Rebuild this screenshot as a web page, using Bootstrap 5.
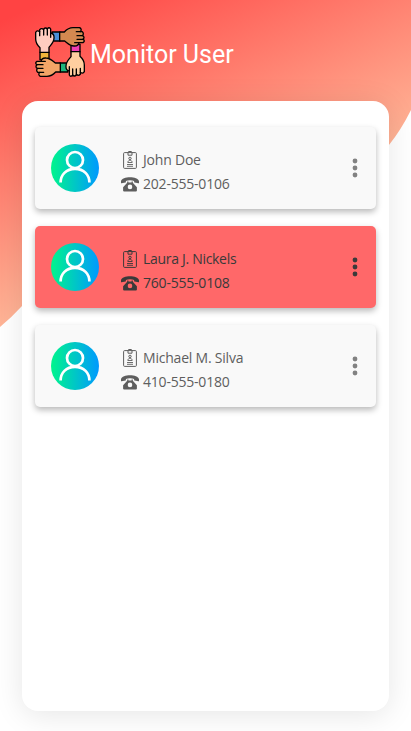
<!DOCTYPE html>
<html lang="en">
<head>
<meta charset="utf-8">
<meta name="viewport" content="width=device-width, initial-scale=1">
<title>Monitor User</title>
<link href="https://cdn.jsdelivr.net/npm/bootstrap@5.3.0/dist/css/bootstrap.min.css" rel="stylesheet">
<style>
body{width:411px;height:731px;font-family:"Open Sans","Noto Sans",sans-serif;background:#fff}
.backdrop{left:0;top:0;z-index:0}
.page-head{height:101px;padding:27px 0 0 35px;gap:5px}
.page-title{font:400 25px/30px Roboto,sans-serif;color:#fff;margin-top:13px}
.panel{width:367px;height:610px;margin-left:22px;padding:26px 13px;border-radius:16px;gap:17px;box-shadow:0 4px 30px rgba(0,0,0,.1)}
.user-card{height:82px;border-radius:5px;background:#f9f9f9;color:#5e5e5e;padding-left:16px;padding-right:18px;box-shadow:0 3px 6px rgba(0,0,0,.28)}
.user-card.alerting{background:#ff6869;color:#3a3a3a}
.details{margin-left:22px;padding-top:8px}
.line{height:24px;gap:4px;font-size:14px;line-height:24px;letter-spacing:-.21px;white-space:nowrap}
.alerting .line:first-child{letter-spacing:-.3px}
.dots{color:#828282}
.alerting .dots{color:#3a3a3a}
svg{display:block;flex:none}
</style>
<script src="https://cdn.jsdelivr.net/npm/bootstrap@5.3.0/dist/js/bootstrap.bundle.min.js"></script>
</head>
<body class="position-relative overflow-hidden m-0">
<svg class="backdrop position-absolute" width="411" height="340" viewBox="0 0 411 340" aria-hidden="true">
<defs><linearGradient id="sky" gradientUnits="userSpaceOnUse" x1="8" y1="18" x2="124" y2="268"><stop stop-color="#ff4343"/><stop offset="1" stop-color="#ffb496"/></linearGradient></defs>
<path fill="url(#sky)" d="M0 0H411V110Q401 130 389 145C280 290 110 220 22 306Q12 317 0 327Z"/>
</svg>
<svg width="0" height="0" class="position-absolute" aria-hidden="true">
<defs>
<linearGradient id="avatarFill"><stop stop-color="#00f58c"/><stop offset="1" stop-color="#0099ff"/></linearGradient>
<g id="cuff"><path d="M15 76H42V98H15Z" stroke="#000" stroke-width="4"/></g>
<g id="hand" stroke="#000" stroke-width="4" stroke-linejoin="round" stroke-linecap="round">
<path d="M15 76V62C5 53 2 46 2 36V16Q7 8 14 14V8Q20 2 26 8V6Q32 0 37 6V5Q43 -1 47 6V18Q58 20 57 33C57 45 51 50 42 61V76Z"/>
<path fill="none" d="M14 14V26M26 8V24M37 6V24M47 18V31"/></g>
<symbol id="avatar" viewBox="0 0 48 48"><circle cx="24" cy="24" r="24" fill="url(#avatarFill)"/><g fill="none" stroke="#fff" stroke-width="2.7"><circle cx="24" cy="16" r="8"/><path d="M9.6 38.5C9.6 31 15 24.8 24 24.8S38.4 31 38.4 38.5"/></g></symbol>
<symbol id="badge-id" viewBox="0 0 18 18"><g fill="none" stroke="currentColor"><rect x="2.6" y="1.6" width="12.8" height="15.8" rx="1"/><path d="M7 1.5V4.2H11V1.5L10.4.5H7.6Z"/><circle cx="9" cy="7.4" r="1.2"/><path d="M6.8 11.5C6.8 8.6 11.2 8.6 11.2 11.5ZM6 13.5H12M6 15.3H12" stroke-width=".9"/></g></symbol>
<symbol id="phone" viewBox="0 0 18 15"><path fill="currentColor" d="M0 4.2C1-1 17-1 18 4.2V5.7Q18 6.3 17.3 6.2L13.7 5.6Q13.1 5.5 13.1 4.9V3.9C11 3 7 3 4.9 3.9V4.9Q4.9 5.5 4.3 5.6L.7 6.2Q0 6.3 0 5.7Z"/><path fill="currentColor" fill-rule="evenodd" d="M6.2 4.4H7.4V5.5H10.6V4.4H11.8V5.7L15.9 10.2V13.6Q15.9 14.6 14.9 14.6H3.1Q2.1 14.6 2.1 13.6V10.2L6.2 5.7ZM9 7.6A2.3 2.3 0 1 0 9 12.2A2.3 2.3 0 1 0 9 7.6Z"/></symbol>
<symbol id="more" viewBox="0 0 6 20"><g fill="currentColor"><circle cx="3" cy="3" r="2.4"/><circle cx="3" cy="10" r="2.4"/><circle cx="3" cy="17" r="2.4"/></g></symbol>
</defs>
</svg>

<header class="page-head position-relative d-flex align-items-start">
<svg width="50" height="50" viewBox="0 0 150 150" role="img" aria-label="Joined hands">
<use href="#cuff" fill="#f3b53b"/><use href="#cuff" fill="#4a90d9" transform="rotate(90 75 75)"/><use href="#cuff" fill="#f03cb4" transform="rotate(180 75 75)"/><use href="#cuff" fill="#1fb57c" transform="rotate(270 75 75)"/>
<use href="#hand" fill="#ffcdc0"/><use href="#hand" fill="#d48950" transform="rotate(90 75 75)"/><use href="#hand" fill="#ffcfa0" transform="rotate(180 75 75)"/><use href="#hand" fill="#f3a567" transform="rotate(270 75 75)"/>
</svg>
<h1 class="page-title mb-0">Monitor User</h1>
</header>

<main class="panel position-relative d-flex flex-column bg-white">
<article class="user-card d-flex align-items-center">
<svg width="48" height="48"><use href="#avatar"/></svg>
<div class="details flex-grow-1">
<div class="line d-flex align-items-center"><svg width="18" height="18"><use href="#badge-id"/></svg><span>John Doe</span></div>
<div class="line d-flex align-items-center"><svg width="18" height="15"><use href="#phone"/></svg><span>202-555-0106</span></div>
</div>
<svg class="dots" width="6" height="20"><use href="#more"/></svg>
</article>
<article class="user-card alerting d-flex align-items-center">
<svg width="48" height="48"><use href="#avatar"/></svg>
<div class="details flex-grow-1">
<div class="line d-flex align-items-center"><svg width="18" height="18"><use href="#badge-id"/></svg><span>Laura J. Nickels</span></div>
<div class="line d-flex align-items-center"><svg width="18" height="15"><use href="#phone"/></svg><span>760-555-0108</span></div>
</div>
<svg class="dots" width="6" height="20"><use href="#more"/></svg>
</article>
<article class="user-card d-flex align-items-center">
<svg width="48" height="48"><use href="#avatar"/></svg>
<div class="details flex-grow-1">
<div class="line d-flex align-items-center"><svg width="18" height="18"><use href="#badge-id"/></svg><span>Michael M. Silva</span></div>
<div class="line d-flex align-items-center"><svg width="18" height="15"><use href="#phone"/></svg><span>410-555-0180</span></div>
</div>
<svg class="dots" width="6" height="20"><use href="#more"/></svg>
</article>
</main>
</body>
</html>
